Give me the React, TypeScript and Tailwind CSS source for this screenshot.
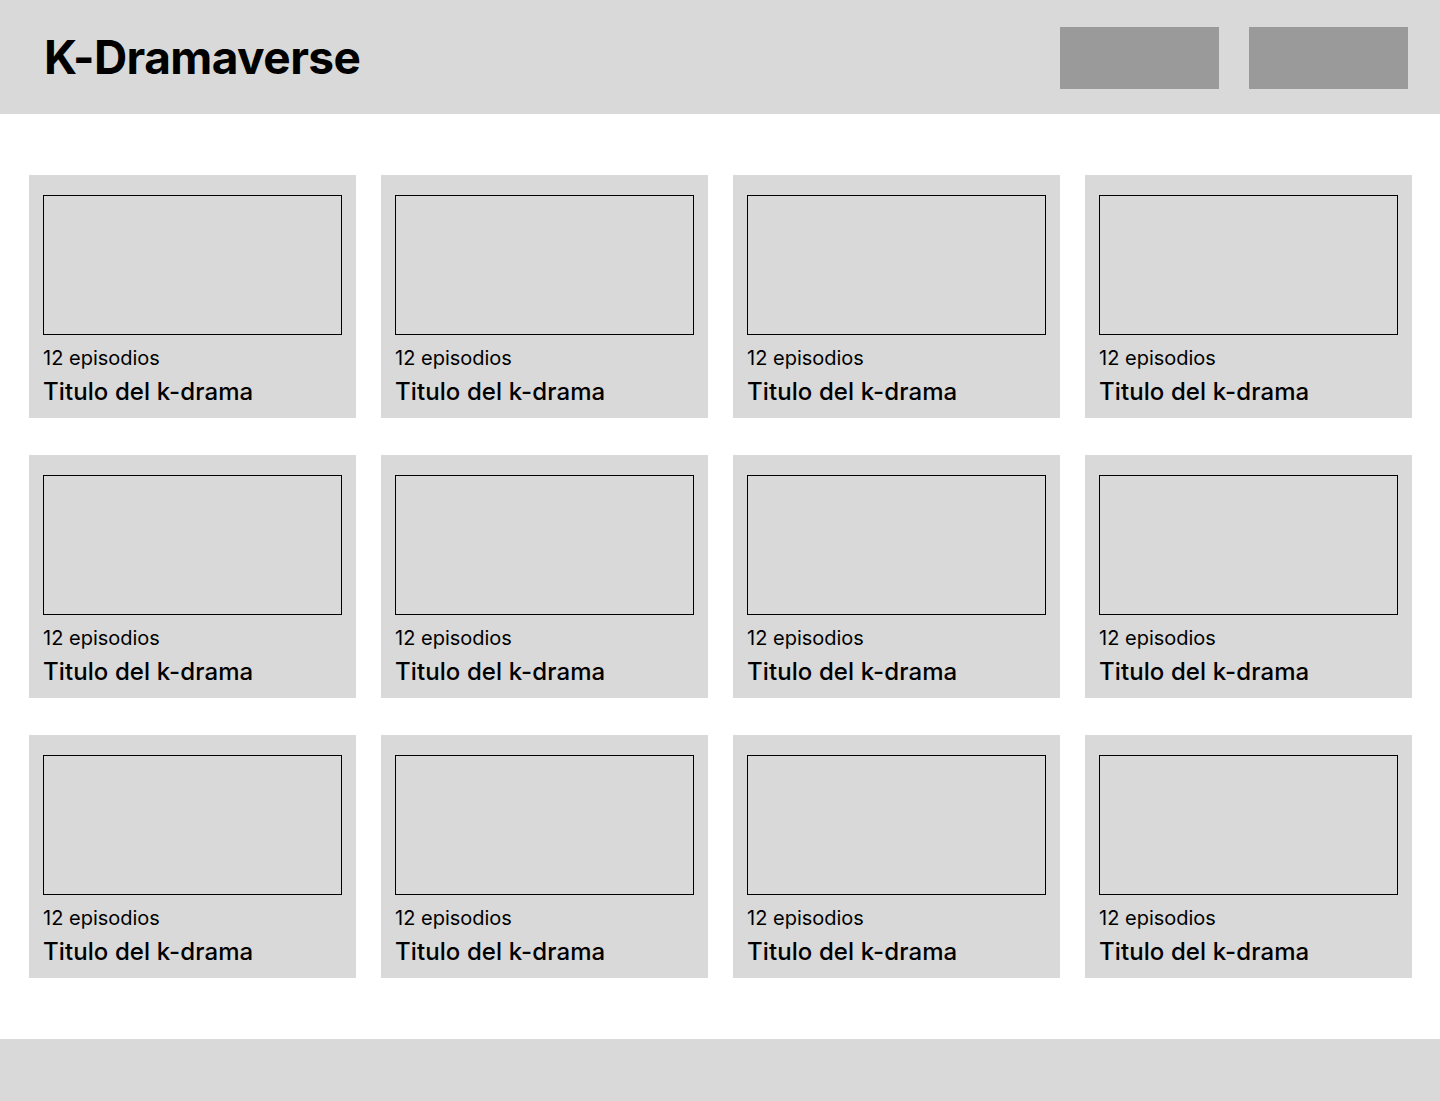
const dramas = Array.from({ length: 12 }, (_, i) => ({
  id: i,
  episodes: 12,
  title: 'Titulo del k-drama',
}));

export default function App() {
  return (
    <div className="min-h-screen bg-white flex flex-col" style={{ fontFamily: 'Inter, "Liberation Sans", sans-serif' }}>
      <header className="h-[114px] bg-[#d9d9d9] flex items-center justify-between pl-[44px] pr-[32px]">
        <h1 className="text-[46px] font-bold text-black leading-none tracking-[-0.012em]">K-Dramaverse</h1>
        <div className="flex gap-[30px] mt-[2px]">
          <button className="w-[159px] h-[62px] bg-[#9a9a9a]"></button>
          <button className="w-[159px] h-[62px] bg-[#9a9a9a]"></button>
        </div>
      </header>

      <main className="pt-[61px] pb-[61px] pl-[29px]">
        <div className="grid grid-cols-[repeat(4,327px)] gap-x-[25px] gap-y-[37px]">
          {dramas.map((drama) => (
            <div key={drama.id} className="h-[243px] bg-[#d9d9d9] pt-[20px] px-[14px]">
              <div className="h-[140px] border border-black"></div>
              <p className="mt-[11px] text-[20px] leading-[24px] text-black">{drama.episodes} episodios</p>
              <h3 className="mt-[7px] text-[24px] leading-[29px] font-medium tracking-[0.004em] text-black">{drama.title}</h3>
            </div>
          ))}
        </div>
      </main>

      <footer className="h-[62px] bg-[#d9d9d9]"></footer>
    </div>
  );
}
